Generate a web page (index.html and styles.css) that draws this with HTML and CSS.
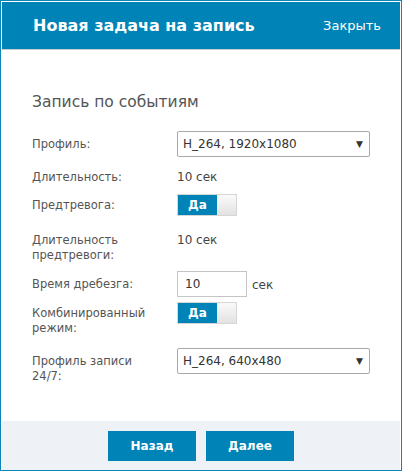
FILE: index.html
```html
<!DOCTYPE html>
<html lang="ru">
  <head>
    <meta charset="UTF-8" />
    <meta name="viewport" content="width=device-width, initial-scale=1.0" />
    <title>Новая задача на запись</title>
    <link rel="stylesheet" href="styles.css">
  </head>
  <body>
    <div class="dialog">
      <div class="dialog-header">
        <h1>Новая задача на запись</h1>
        <span class="close">Закрыть</span>
      </div>

      <div class="dialog-body">
        <h2>Запись по событиям</h2>

        <div class="row row-profile">
          <div class="label">Профиль:</div>
          <div class="select">
            <span>H_264, 1920x1080</span>
            <span class="arrow">&#9660;</span>
          </div>
        </div>

        <div class="row row-duration">
          <div class="label">Длительность:</div>
          <div class="value">10 сек</div>
        </div>

        <div class="row row-prealarm">
          <div class="label">Предтревога:</div>
          <div class="toggle">
            <span class="toggle-on">Да</span>
            <span class="toggle-off"></span>
          </div>
        </div>

        <div class="row row-preduration">
          <div class="label">Длительность<br />предтревоги:</div>
          <div class="value">10 сек</div>
        </div>

        <div class="row row-bounce">
          <div class="label">Время дребезга:</div>
          <div class="input">10</div>
          <div class="unit">сек</div>
        </div>

        <div class="row row-combined">
          <div class="label">Комбинированный<br />режим:</div>
          <div class="toggle">
            <span class="toggle-on">Да</span>
            <span class="toggle-off"></span>
          </div>
        </div>

        <div class="row row-profile247">
          <div class="label">Профиль записи<br />24/7:</div>
          <div class="select">
            <span>H_264, 640x480</span>
            <span class="arrow">&#9660;</span>
          </div>
        </div>
      </div>

      <div class="dialog-footer">
        <button>Назад</button>
        <button>Далее</button>
      </div>
    </div>
  </body>
</html>
```

FILE: styles.css
```css
body {
  margin: 0;
  font-family: "DejaVu Sans", Verdana, sans-serif;
  color: #444;
}
.dialog {
  width: 402px;
  height: 471px;
  box-sizing: border-box;
  border: 1px solid #0a86b8;
  padding: 1px 1px 0 1px;
  display: flex;
  flex-direction: column;
  background: #fff;
}
.dialog-header {
  height: 47px;
  background-color: #0084b7;
  border-bottom: 1px solid #c8ccd0;
  display: flex;
  align-items: center;
  justify-content: space-between;
  padding: 0 19px 0 31px;
  color: #fff;
}
.dialog-header h1 {
  margin: 0;
  font-size: 16px;
  font-weight: bold;
}
.close {
  font-size: 13px;
}
.dialog-body {
  flex: 1;
  padding: 42px 30px 0 30px;
}
.dialog-body h2 {
  margin: 0 0 19px 0;
  font-size: 15.5px;
  font-weight: normal;
  line-height: 20px;
  color: #555;
}
.row {
  display: flex;
  align-items: flex-start;
  font-size: 12px;
  line-height: 15px;
}
.label {
  width: 145px;
  flex-shrink: 0;
  font-size: 11.5px;
  color: #555;
}
.value {
  color: #444;
}
.row-profile {
  margin-bottom: 13px;
}
.row-profile .label,
.row-bounce .label,
.row-profile247 .label {
  padding-top: 6px;
}
.row-duration {
  margin-bottom: 9px;
}
.row-prealarm {
  margin-bottom: 17px;
}
.row-prealarm .label,
.row-combined .label {
  padding-top: 4px;
}
.row-preduration {
  margin-bottom: 8px;
}
.row-bounce {
  margin-bottom: 5px;
}
.row-combined {
  margin-bottom: 12px;
}
.select {
  width: 194px;
  height: 26px;
  box-sizing: border-box;
  border: 1px solid #a9a9a9;
  border-radius: 2px;
  display: flex;
  align-items: center;
  justify-content: space-between;
  padding: 0 6px 0 5px;
  color: #333;
}
.arrow {
  font-size: 9px;
  color: #333;
}
.input {
  width: 70px;
  height: 26px;
  box-sizing: border-box;
  border: 1px solid #c4c4c4;
  padding: 5px 0 0 7px;
  color: #333;
}
.unit {
  padding: 7px 0 0 5px;
}
.toggle {
  display: flex;
  width: 60px;
  height: 22px;
  box-sizing: border-box;
  border: 1px solid #d6d6d6;
}
.toggle-on {
  width: 39px;
  background-color: #0084b7;
  color: #fff;
  font-weight: bold;
  text-align: center;
  line-height: 20px;
}
.toggle-off {
  flex: 1;
  background: linear-gradient(to bottom, #fafafa, #e2e2e2);
}
.dialog-footer {
  height: 49px;
  background-color: #eef2f7;
  display: flex;
  justify-content: center;
  align-items: center;
  gap: 10px;
}
.dialog-footer button {
  width: 88px;
  height: 30px;
  border: none;
  background-color: #0084b7;
  color: #fff;
  font-family: "DejaVu Sans", Verdana, sans-serif;
  font-size: 12px;
  font-weight: bold;
}
```
